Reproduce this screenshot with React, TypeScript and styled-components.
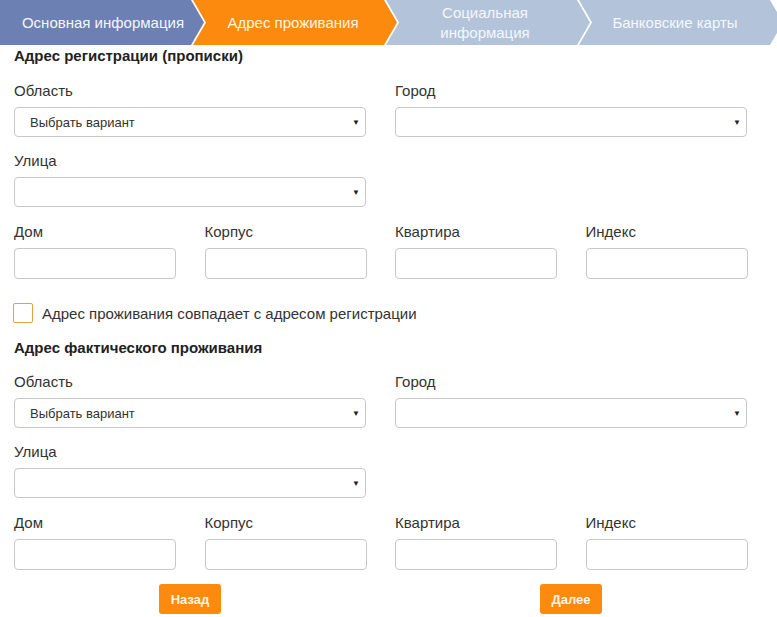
import styled, { createGlobalStyle } from 'styled-components';

const GlobalStyle = createGlobalStyle`
  body {
    margin: 0;
    background: #fff;
    font-family: "Liberation Sans", Arial, sans-serif;
    color: #333;
  }
`;

type StepState = 'done' | 'active' | 'todo';

const steps: { title: string; state: StepState; pl: number; pr: number }[] = [
  { title: 'Основная информация', state: 'done', pl: 8, pr: 6 },
  { title: 'Адрес проживания', state: 'active', pl: 11, pr: 15 },
  { title: 'Социальная информация', state: 'todo', pl: 40, pr: 46 },
  { title: 'Банковские карты', state: 'todo', pl: 13, pr: 25 },
];

const stepColors: Record<StepState, string> = {
  done: '#6c80b3',
  active: '#fb8a0e',
  todo: '#b3c4da',
};

const AddressBlock = ({ title, top }: { title: string; top: number }) => (
  <Section>
    <SectionTitle>{title}</SectionTitle>
    <Row $top={top}>
      <Field>
        <Label>Область</Label>
        <Select>
          <SelectText>Выбрать вариант</SelectText>
          <Caret>▼</Caret>
        </Select>
      </Field>
      <Field>
        <Label>Город</Label>
        <Select>
          <SelectText />
          <Caret>▼</Caret>
        </Select>
      </Field>
    </Row>
    <Row $top={15}>
      <Field>
        <Label>Улица</Label>
        <Select>
          <SelectText />
          <Caret>▼</Caret>
        </Select>
      </Field>
    </Row>
    <QuadRow>
      {['Дом', 'Корпус', 'Квартира', 'Индекс'].map((l) => (
        <Field key={l}>
          <Label>{l}</Label>
          <Input />
        </Field>
      ))}
    </QuadRow>
  </Section>
);

const App = () => {
  return (
    <>
      <GlobalStyle />
      <Stepper>
        {steps.map((s, i) => (
          <Step key={s.title} $state={s.state} $first={i === 0} $pl={s.pl} $pr={s.pr}>
            {s.title}
          </Step>
        ))}
      </Stepper>
      <Form>
        <AddressBlock title="Адрес регистрации (прописки)" top={17} />
        <CheckRow>
          <CheckBox />
          <CheckText>Адрес проживания совпадает с адресом регистрации</CheckText>
        </CheckRow>
        <AddressBlock title="Адрес фактического проживания" top={16} />
        <Actions>
          <ButtonCell>
            <Button>Назад</Button>
          </ButtonCell>
          <ButtonCell>
            <Button>Далее</Button>
          </ButtonCell>
        </Actions>
      </Form>
    </>
  );
};

const Stepper = styled.div`
  display: flex;
  height: 45px;
  overflow: hidden;
`;

const Step = styled.div<{ $state: StepState; $first: boolean; $pl: number; $pr: number }>`
  flex: 0 0 204px;
  margin-left: ${(p) => (p.$first ? '0' : '-11px')};
  padding: 0 ${(p) => p.$pr}px 0 ${(p) => p.$pl}px;
  box-sizing: border-box;
  display: flex;
  align-items: center;
  justify-content: center;
  text-align: center;
  background: ${(p) => stepColors[p.$state]};
  color: ${(p) => (p.$state === 'active' ? '#fff6e0' : '#f4f7fb')};
  font-size: 15px;
  line-height: 20px;
  clip-path: ${(p) =>
    p.$first
      ? 'polygon(0 0, calc(100% - 13px) 0, 100% 50%, calc(100% - 13px) 100%, 0 100%)'
      : 'polygon(0 0, calc(100% - 13px) 0, 100% 50%, calc(100% - 13px) 100%, 0 100%, 13px 50%)'};
`;

const Form = styled.div`
  padding: 0 30px 0 14px;
`;

const Section = styled.div`
  display: flex;
  flex-direction: column;
`;

const SectionTitle = styled.div`
  font-size: 15px;
  font-weight: bold;
  color: #222;
  margin-top: 2px;
  line-height: 18px;
  height: 18px;
`;

const Row = styled.div<{ $top: number }>`
  display: grid;
  grid-template-columns: 352px 352px;
  column-gap: 29px;
  margin-top: ${(p) => p.$top}px;
`;

const QuadRow = styled.div`
  display: grid;
  grid-template-columns: repeat(4, 162px);
  column-gap: 28.5px;
  margin-top: 16px;
`;

const Field = styled.div`
  display: flex;
  flex-direction: column;
`;

const Label = styled.div`
  font-size: 15px;
  line-height: 18px;
  color: #333;
  margin-bottom: 7px;
`;

const Select = styled.div`
  height: 30px;
  box-sizing: border-box;
  border: 1px solid #c8c8c8;
  border-radius: 4px;
  display: flex;
  align-items: center;
  padding: 0 5px 0 15px;
`;

const SelectText = styled.span`
  flex: 1;
  font-size: 13px;
  color: #333;
`;

const Caret = styled.span`
  font-size: 8px;
  color: #222;
`;

const Input = styled.div`
  height: 31px;
  box-sizing: border-box;
  border: 1px solid #c8c8c8;
  border-radius: 4px;
`;

const CheckRow = styled.div`
  display: flex;
  align-items: center;
  gap: 9px;
  margin: 24px 0 14px -1px;
`;

const CheckBox = styled.div`
  width: 20px;
  height: 20px;
  box-sizing: border-box;
  border: 1.5px solid #e6a23c;
  border-radius: 2px;
`;

const CheckText = styled.span`
  font-size: 15px;
  color: #333;
`;

const Actions = styled.div`
  display: grid;
  grid-template-columns: 352px 352px;
  column-gap: 29px;
  margin-top: 14px;
`;

const ButtonCell = styled.div`
  display: flex;
  justify-content: center;
`;

const Button = styled.div`
  width: 62px;
  height: 30px;
  background: #fb8a0e;
  border-radius: 3px;
  color: #fff6e6;
  font-size: 13px;
  font-weight: bold;
  display: flex;
  align-items: center;
  justify-content: center;
`;

export default App;
